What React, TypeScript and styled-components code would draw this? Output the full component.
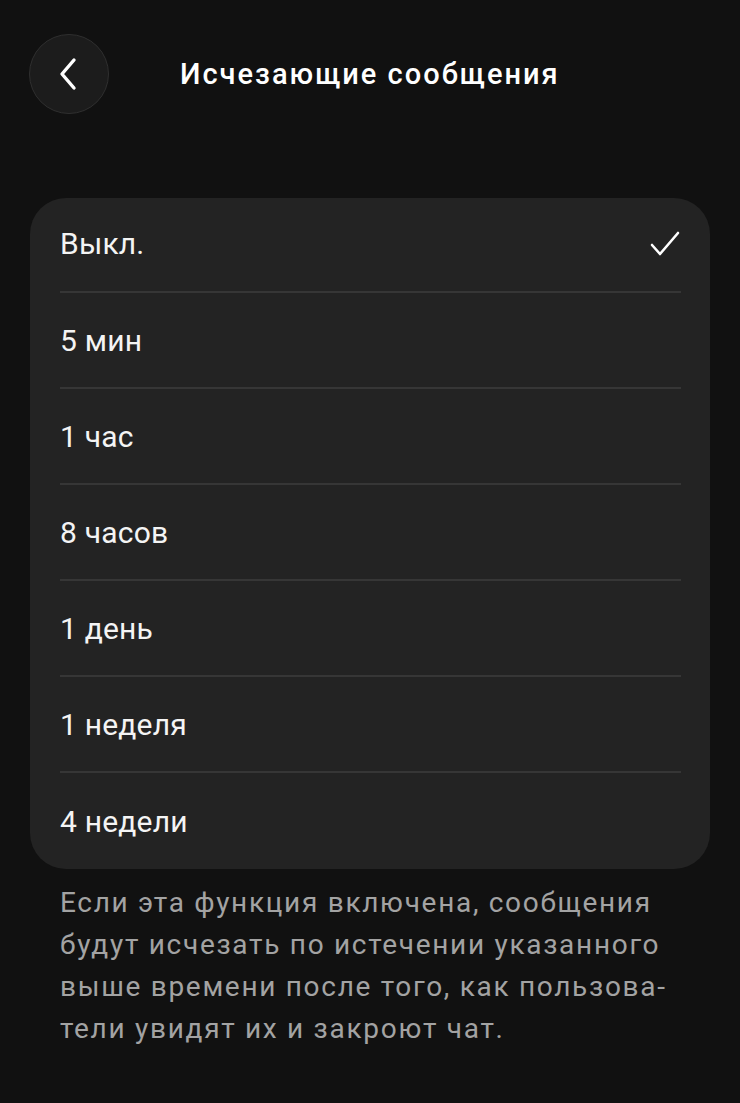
import React from "react";
import styled, { createGlobalStyle } from "styled-components";

const Global = createGlobalStyle`
  html, body { margin: 0; padding: 0; background: #111111; }
  body { font-family: Roboto, "Noto Sans", sans-serif; -webkit-font-smoothing: antialiased; }
`;

const Page = styled.div`
  width: 740px;
  min-height: 1103px;
  background: #111111;
  box-sizing: border-box;
  padding: 34px 30px 0 30px;
`;

const Header = styled.header`
  display: flex;
  align-items: center;
  height: 80px;
`;

const BackButton = styled.button`
  width: 80px;
  height: 80px;
  border-radius: 50%;
  background: #1c1c1c;
  border: 1.5px solid #2f2f2f;
  display: flex;
  align-items: center;
  justify-content: center;
  padding: 0;
  margin-left: -1px;
  box-sizing: border-box;
`;

const Title = styled.h1`
  margin: 0 0 0 71px;
  font-size: 29px;
  font-weight: 500;
  color: #ffffff;
  letter-spacing: 2px;
`;

const Card = styled.div`
  margin-top: 84px;
  background: #232323;
  border-radius: 36px;
  padding: 0 29px 0 30px;
`;

const Row = styled.div<{ $last?: boolean }>`
  height: 96px;
  display: flex;
  align-items: center;
  justify-content: space-between;
  border-bottom: ${(p) => (p.$last ? "none" : "2px solid #363636")};
  box-sizing: border-box;
  &:first-child { height: 95px; padding-bottom: 2px; }
`;

const Label = styled.span`
  font-size: 30px;
  color: #f4f4f4;
  letter-spacing: 0.2px;
`;

const Footnote = styled.p`
  margin: 13px 0 0 30px;
  font-size: 28px;
  line-height: 42px;
  letter-spacing: 1.7px;
  color: #a3a3a3;
`;

const options = ["Выкл.", "5 мин", "1 час", "8 часов", "1 день", "1 неделя", "4 недели"];

export default function App() {
  return (
    <>
      <Global />
      <Page>
        <Header>
          <BackButton aria-label="Назад">
            <svg width="28" height="40" viewBox="0 0 28 40">
              <path d="M19 6 L7 20 L19 34" fill="none" stroke="#fff" strokeWidth="3.4" strokeLinecap="round" strokeLinejoin="round" />
            </svg>
          </BackButton>
          <Title>Исчезающие сообщения</Title>
        </Header>
        <Card>
          {options.map((o, i) => (
            <Row key={o} $last={i === options.length - 1}>
              <Label>{o}</Label>
              {i === 0 && (
                <svg width="32" height="30" viewBox="0 0 32 30">
                  <path d="M3 16 L11 25 L29 4" fill="none" stroke="#fff" strokeWidth="2.6" strokeLinecap="round" strokeLinejoin="round" />
                </svg>
              )}
            </Row>
          ))}
        </Card>
        <Footnote>
          Если эта функция включена, сообщения<br />
          будут исчезать по истечении указанного<br />
          выше времени после того, как пользова-<br />
          тели увидят их и закроют чат.
        </Footnote>
      </Page>
    </>
  );
}
